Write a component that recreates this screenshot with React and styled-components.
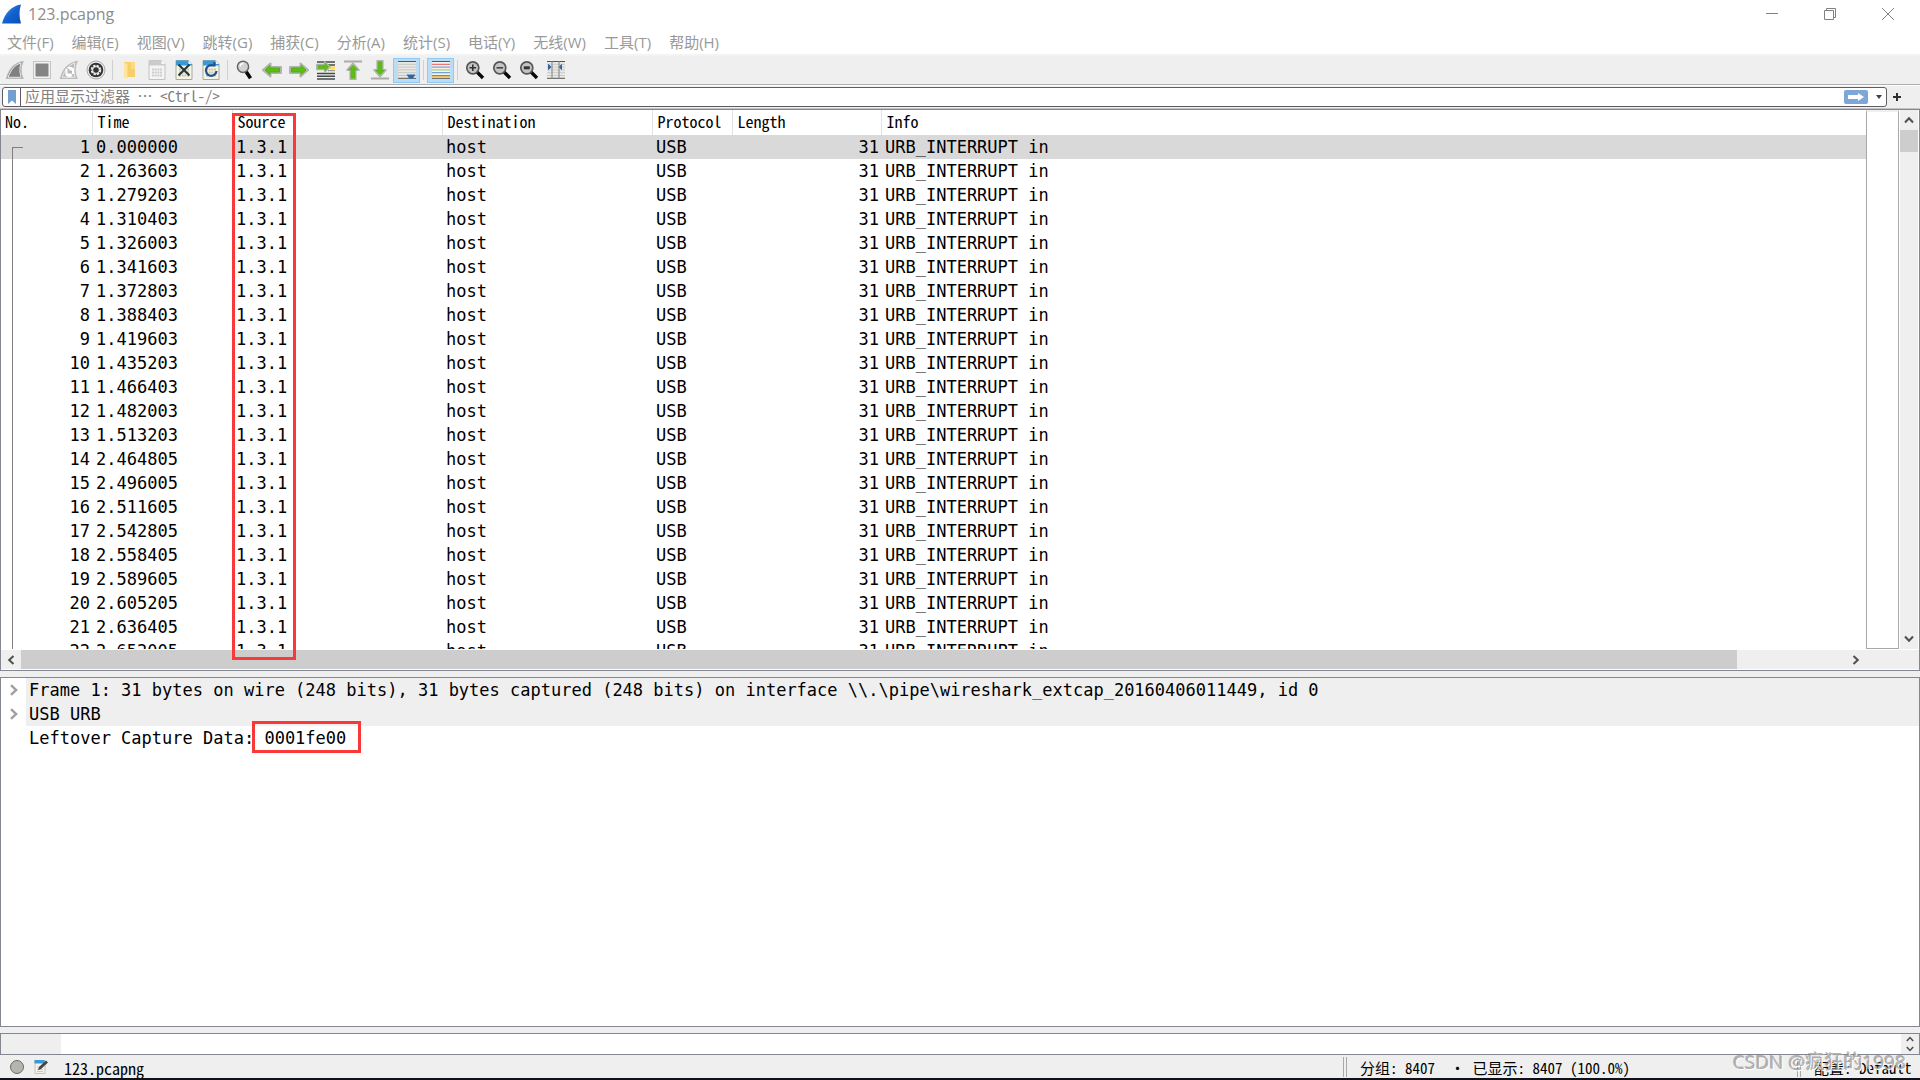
import React from "react";
import styled, { createGlobalStyle, css } from "styled-components";

const mono = '"DejaVu Sans Mono", monospace';
const slab = '"Noto Sans Mono CJK SC", "Liberation Mono", "Noto Sans CJK SC", monospace';
const sans = '"Open Sans", "Noto Sans CJK SC", sans-serif';
const edge = "#828790";
const face = "#efefef";

const Global = createGlobalStyle`
  * { box-sizing: border-box; }
  body { margin: 0; background: ${face}; color: #000; }
  button, input { font: inherit; color: inherit; margin: 0; padding: 0; border: 0; background: none; }
  button { display: flex; align-items: center; justify-content: center; }
  svg { display: block; flex: none; }
`;

const Window = styled.div`
  position: relative;
  display: flex;
  flex-direction: column;
  height: 100vh;
  overflow: hidden;
  font: 15px/20px ${slab};
  border-bottom: 2px solid #101018;
`;

const TitleBar = styled.header`
  display: flex;
  align-items: center;
  height: 28px;
  padding: 0 3px 0 2px;
  background: #fff;
  color: #8c8c8c;
  font: 16px/20px ${sans};
`;
const Title = styled.h1`
  flex: 1;
  margin: 0;
  padding-left: 6px;
  font: inherit;
`;
const CaptionButton = styled.button`
  width: 58px;
  height: 28px;
`;

const MenuBar = styled.nav`
  display: flex;
  gap: 18px;
  height: 28px;
  padding: 4px 7px 0;
  background: #fff;
  border-bottom: 2px solid #f3f3f3;
  font: 15px/20px ${sans};
  color: #999;
`;
const MenuItem = styled.button`
  height: 20px;
  white-space: nowrap;
`;

const ToolBar = styled.div`
  display: flex;
  align-items: center;
  height: 29px;
  padding-left: 1px;
  background: ${face};
  border-bottom: 1px solid #adadad;
`;
const Tool = styled.button`
  width: 27px;
  height: 25px;
  border: 1px solid transparent;
  ${(p) => p.$on && css`
    background: #bcdcf4;
    border-color: #90c8f6;
  `}
`;
const Separator = styled.span`
  width: 1px;
  height: 20px;
  margin: 0 3px;
  background: #d0d0d0;
`;

const FilterBar = styled.form`
  display: flex;
  align-items: center;
  height: 24px;
  padding: 0 18px 0 2px;
  gap: 5px;
  border-top: 1px solid #fff;
  border-bottom: 1px solid #c4c4c8;
`;
const FilterBox = styled.div`
  display: flex;
  align-items: center;
  flex: 1;
  height: 20px;
  border: 1px solid #5d5d62;
  border-radius: 3px;
  background: #fff;
`;
const Bookmark = styled.button`
  width: 18px;
  height: 18px;
  border-right: 1px solid #5d5d62;
`;
const FilterInput = styled.input`
  flex: 1;
  min-width: 0;
  height: 18px;
  padding: 0 0 2px 4px;
  outline: 0;
  &::placeholder { color: #808080; opacity: 1; }
`;
const ApplyButton = styled.button`
  width: 24px;
  height: 14px;
  border-radius: 2px;
  background: #7da7d9;
`;
const HistoryButton = styled.button`
  width: 18px;
  height: 18px;
  padding-left: 4px;
`;
const AddButton = styled.button`
  width: 10px;
  height: 18px;
`;

const Pane = styled.section`
  position: relative;
  display: flex;
  flex-direction: column;
  flex: ${(p) => p.$share} 1 0;
  min-height: 0;
  border: 1px solid ${edge};
  background: #fff;
`;
const Splitter = styled.div`
  flex: none;
  height: 6px;
  background: ${face};
`;
const ListBody = styled.div`
  display: flex;
  flex: 1;
  min-height: 0;
`;
const ListView = styled.div`
  position: relative;
  flex: 1;
  overflow: hidden;
`;
const PacketTable = styled.table`
  width: 100%;
  table-layout: fixed;
  border-collapse: collapse;
`;
const HeadCell = styled.th`
  height: 25px;
  padding: 0 0 2px 5px;
  border-left: 1px solid #e2e2e2;
  text-align: left;
  font: 16px/23px ${slab};
  &:first-child { border-left: 0; padding-left: 4px; }
`;
const Row = styled.tr`
  height: 24px;
  background: ${(p) => (p.$selected ? "#d9d9d9" : "#fff")};
`;
const Cell = styled.td`
  padding: 0 2px 0 4px;
  text-align: ${(p) => (p.$right ? "right" : "left")};
  font: 17px/24px ${mono};
  white-space: nowrap;
`;
const RelationLine = styled.span`
  position: absolute;
  left: 11px;
  top: 37px;
  bottom: 0;
  width: 11px;
  border: solid #808080;
  border-width: 1px 0 0 1px;
`;
const SourceMark = styled.span`
  position: absolute;
  z-index: 1;
  left: 231px;
  top: 3px;
  bottom: 10px;
  width: 64px;
  border: 3px solid #fb3838;
  pointer-events: none;
`;
const MiniMap = styled.div`
  width: 33px;
  border: 1px solid #a8a8a8;
  border-top: 2px solid ${face};
`;
const VScroll = styled.div`
  display: flex;
  flex-direction: column;
  align-items: center;
  width: 20px;
  background: ${face};
  border: solid #fff;
  border-width: 0 1px;
`;
const HScroll = styled.div`
  display: flex;
  height: 21px;
  padding-right: 53px;
  background: ${face};
  border: solid #fff;
  border-width: 1px 0;
`;
const ScrollButton = styled.button`
  width: 20px;
  height: 20px;
  flex: none;
`;
const VThumb = styled.span`
  width: 100%;
  height: 22px;
  background: #cdcdcd;
`;
const Track = styled.span`
  flex: 1;
`;
const HThumb = styled.span`
  display: block;
  width: 94%;
  height: 100%;
  background: #cdcdcd;
`;

const Tree = styled.ul`
  margin: 0;
  padding: 0;
  list-style: none;
  font: 17px/24px ${mono};
`;
const TreeItem = styled.li`
  display: flex;
  height: 24px;
`;
const Expander = styled.button`
  width: 25px;
  height: 24px;
  flex: none;
`;
const TreeText = styled.span`
  flex: 1;
  padding-left: 3px;
  white-space: pre;
  background: ${(p) => (p.$shaded ? "#efefef" : "transparent")};
`;
const Marked = styled.span`
  position: relative;
  display: inline-block;
  height: 24px;
  &::after {
    content: "";
    position: absolute;
    inset: -5px -15px -3px -12px;
    border: 3px solid #fb3838;
  }
`;

const BytesPane = styled.section`
  display: flex;
  flex: none;
  height: 22px;
  border: 1px solid ${edge};
  background: #fff;
`;
const Offsets = styled.div`
  width: 60px;
  background: ${face};
`;
const Bytes = styled.div`
  flex: 1;
`;
const Spin = styled.div`
  width: 18px;
  background: ${face};
`;
const SpinButton = styled.button`
  width: 18px;
  height: 10px;
`;

const StatusBar = styled.footer`
  display: flex;
  flex: none;
  align-items: center;
  height: 23px;
  padding-left: 9px;
`;
const StatusButton = styled.button`
  width: 16px;
  height: 18px;
  margin-right: 8px;
`;
const StatusText = styled.span`
  flex: ${(p) => (p.$grow ? "1" : "none")};
  width: ${(p) => p.$width || "auto"};
  padding: 3px 0 0 ${(p) => p.$pad}px;
  font-size: ${(p) => (p.$grow ? 16 : 15)}px;
  white-space: pre;
`;
const Grip = styled.span`
  width: 4px;
  height: 20px;
  border: solid #a8a8a8;
  border-width: 0 1px;
`;
const Watermark = styled.span`
  position: absolute;
  right: 14px;
  bottom: 2px;
  font: 19px/28px ${sans};
  color: rgba(165, 165, 165, 0.85);
  text-shadow: 1px 1px 0 #fff, -1px -1px 0 rgba(110, 110, 110, 0.5);
  pointer-events: none;
`;

const menus = ["文件(F)", "编辑(E)", "视图(V)", "跳转(G)", "捕获(C)", "分析(A)", "统计(S)", "电话(Y)", "无线(W)", "工具(T)", "帮助(H)"];
const columns = [
  ["No.", 91], ["Time", 140], ["Source", 210], ["Destination", 210],
  ["Protocol", 80], ["Length", 149], ["Info", null],
];
const times = [
  "0.000000", "1.263603", "1.279203", "1.310403", "1.326003", "1.341603", "1.372803", "1.388403",
  "1.419603", "1.435203", "1.466403", "1.482003", "1.513203", "2.464805", "2.496005", "2.511605",
  "2.542805", "2.558405", "2.589605", "2.605205", "2.636405", "2.652005",
];

const Icon = ({ children, size = 20 }) => (
  <svg width={size} height={size} viewBox="0 0 20 20" fill="none" aria-hidden="true">{children}</svg>
);

const Chevron = ({ dir, color = "#505050", size = 10 }) => {
  const turn = { up: 0, right: 90, down: 180, left: 270 }[dir];
  return (
    <svg width={size} height={size} viewBox="0 0 10 10" fill="none" aria-hidden="true">
      <path d="M1 7.5 5 3.2 9 7.5" stroke={color} strokeWidth="2" transform={`rotate(${turn} 5 5)`} />
    </svg>
  );
};

const finPath = "M1.5 18.5C4 9 9 3 18 1.5C15.5 7 15.5 13 18 18.5Z";
const Fin = ({ restart }) => (
  <Icon>
    <path d={finPath} fill={restart ? "#b8b8b8" : "#808080"} stroke="#bcbcbc" strokeWidth="1.2" />
    <path d="M3.2 17.3C6 9.5 9.5 5 16 3C14.5 8 14.5 13 16.2 17.3Z" stroke="#ededed" strokeWidth="1" />
    {restart && <path d="M7.5 9v5.5h5M14 14V9.5H10.5M7 14a3.5 3 0 0 0 6 1M14 10a3.5 3 0 0 0-5-2" stroke="#fff" strokeWidth="2" />}
  </Icon>
);
const StopIcon = () => (
  <Icon>
    <rect x="1.5" y="1.5" width="17" height="17" fill="#f2f2f2" stroke="#c4c4c4" />
    <rect x="3.5" y="3.5" width="13" height="13" fill="#848484" />
  </Icon>
);
const OptionsIcon = () => (
  <Icon>
    <circle cx="10" cy="10" r="9" fill="#ededed" stroke="#a8a8a8" />
    <circle cx="10" cy="10" r="7.3" fill="#333" />
    <circle cx="10" cy="10" r="4.3" stroke="#eee" strokeWidth="2" strokeDasharray="2.4 .98" />
    <circle cx="10" cy="10" r="3.4" stroke="#eee" strokeWidth="1" />
    <circle cx="10" cy="10" r="2" fill="#333" />
  </Icon>
);
const FolderIcon = () => (
  <Icon>
    <path d="M4 2h7v7h4v8H4Z" fill="#f7cf6a" />
    <path d="M4 2.5 7.5 4v15L4 17.5Z" fill="#ffe49a" />
    <path d="M11 2h4v7h-4Z" fill="#fbdc85" />
  </Icon>
);
const FileIcon = ({ kind }) => {
  const live = kind !== "save";
  return (
    <Icon>
      <path d="M2 .5h12.5L18 4V19.500H2Z" fill={live ? "#f5f5e4" : "#f4f4f4"} stroke={live ? "#a9a9a0" : "#c2c2c2"} />
      <path d="M2 .5h12.5L18 4V5.500H2Z" fill={live ? "#369bd8" : "#cbcbcb"} />
      <path d="M14.5 .5V4H18Z" fill="#fff" />
      <path d="M5 9.500h10M5 12.500h10M5 15.500h10" stroke={live ? "#c6c6b8" : "#cdcdcd"} strokeWidth="2" strokeDasharray="2 .7" />
      {kind === "close" && <path d="M4.500 4.500 15.500 15.500M15.500 4.500 4.500 15.500" stroke="#26333a" strokeWidth="2" />}
      {kind === "reload" && <path d="M12 5.500a5.300 5.300 0 1 0 3.500 5.500M8 5.500h5.500v-3.500" stroke="#234f8f" strokeWidth="2.200" />}
    </Icon>
  );
};
const Lens = ({ sign }) => (
  <Icon>
    <path d="m12 12 6 6" stroke="#080808" strokeWidth="3.4" />
    <circle cx="7.8" cy="7.8" r="6" fill="#c4c4c4" stroke="#555" strokeWidth="1.7" />
    {sign === "plus" && <path d="M4.5 7.8h6.6M7.8 4.5v6.6" stroke="#333" strokeWidth="1.6" />}
    {sign === "minus" && <path d="M4.5 7.8h6.6" stroke="#444" strokeWidth="1.6" />}
    {sign === "reset" && <path d="M4.8 7.8h6" stroke="#333" strokeWidth="3" />}
  </Icon>
);
const FindIcon = () => (
  <Icon>
    <path d="m11 11.5 4.500 6.8" stroke="#080808" strokeWidth="3.6" />
    <circle cx="8" cy="6.8" r="5.6" fill="#d2d2d2" stroke="#666" strokeWidth="1.5" />
    <path d="M5 6.5a3.5 3.5 0 0 1 3.5-3" stroke="#fff" strokeWidth="1.4" />
  </Icon>
);
const arrow = "M1 10 8.500 3.500V7H19v6H8.500v3.500Z";
const Arrow = ({ turn = 0, at = "" }) => (
  <g transform={`${at} rotate(${turn} 10 10)`} strokeLinejoin="round">
    <path d={arrow} fill="#fff" stroke="#b0b4ac" strokeWidth="2" />
    <path d="M3 10 7.800 5.500V8H17.500v4H7.800v2.500Z" fill="#5cbd12" stroke="#4fae10" />
  </g>
);
const GotoIcon = () => (
  <Icon>
    <path d="M1 2h18M10 5h9M1 13.5h18M1 16.2h18M1 19h18" stroke="#454b4b" strokeWidth="1.4" />
    <path d="M14 8h5" stroke="#ffdf4a" strokeWidth="3" />
    <path d="M12 10.7h7" stroke="#888" />
    <Arrow turn={180} at="translate(0 -1) scale(.75 .8)" />
  </Icon>
);
const EndIcon = ({ top }) => (
  <Icon>
    <path d={top ? "M1 1.5h18" : "M1 18.5h18"} stroke="#aaa" strokeWidth="2" />
    <Arrow turn={top ? 90 : 270} at={top ? "translate(1 2.5) scale(.9)" : "translate(1 -.5) scale(.9)"} />
  </Icon>
);
const Lines = ({ colors }) => (
  <>{colors.map((c, i) => <path key={i} d={`M1 ${1.5 + i * 2.8}h18`} stroke={c} strokeWidth="1" />)}</>
);
const AutoScrollIcon = () => (
  <Icon>
    <rect x="1" y="1" width="18" height="18" fill="#e8e9e4" />
    <Lines colors={["#555", "#c6c6c0", "#c6c6c0", "#c6c6c0", "#c6c6c0", "#c6c6c0", "#555"]} />
    <path d="M9.5 14.5h9L15.8 18.5h-3.6Z" fill="#2f65ad" />
  </Icon>
);
const ColorIcon = () => (
  <Icon>
    <rect x="1" y="1" width="18" height="18" fill="#f3f3f0" />
    <Lines colors={["#555", "#ee5555", "#5b8dc9", "#8bcf55", "#5b8dc9", "#9572b0", "#555"]} />
    <path d="M1 16.8h18" stroke="#dcae35" />
  </Icon>
);
const ResizeIcon = () => (
  <Icon>
    <rect x="1" y="1" width="18" height="18" fill="#e8e9e4" />
    <Lines colors={["#555", "#ccc", "#ccc", "#ccc", "#ccc", "#ccc", "#555"]} />
    <path d="M6 1v18M13 1v18" stroke="#808080" />
    <path d="M2.500 4.500 5 7 2.500 9.500ZM15.500 4.500 13.500 7l2 2.500Z" fill="#2f65ad" stroke="#2f65ad" />
  </Icon>
);

const tools = [
  ["开始捕获", <Fin />], ["停止捕获", <StopIcon />], ["重新开始捕获", <Fin restart />], ["捕获选项", <OptionsIcon />], null,
  ["打开", <FolderIcon />], ["保存", <FileIcon kind="save" />], ["关闭", <FileIcon kind="close" />], ["重新加载", <FileIcon kind="reload" />], null,
  ["查找", <FindIcon />], ["后退", <Icon><Arrow /></Icon>], ["前进", <Icon><Arrow turn={180} /></Icon>], ["转到分组", <GotoIcon />],
  ["首个分组", <EndIcon top />], ["最后分组", <EndIcon />], ["自动滚动", <AutoScrollIcon />, true], null,
  ["着色", <ColorIcon />, true], null,
  ["放大", <Lens sign="plus" />], ["缩小", <Lens sign="minus" />], ["原始大小", <Lens sign="reset" />], ["调整列宽", <ResizeIcon />],
];

export default function App() {
  return (
    <Window>
      <Global />
      <TitleBar>
        <svg width="20" height="20" viewBox="0 0 20 20" aria-hidden="true">
          <defs>
            <linearGradient id="fin" x1="0" y1="0" x2="1" y2="1">
              <stop offset="0" stopColor="#4a9af0" /><stop offset=".5" stopColor="#1263d0" /><stop offset="1" stopColor="#0a4fb4" />
            </linearGradient>
          </defs>
          <path d="M0 19.5C3 9 9 2 19 .5C17 6 17 13 19 19.5Z" fill="url(#fin)" />
        </svg>
        <Title>123.pcapng</Title>
        <CaptionButton aria-label="最小化"><svg width="12" height="12" viewBox="0 0 12 12"><path d="M0 5.5h12" stroke="#808080" /></svg></CaptionButton>
        <CaptionButton aria-label="还原"><svg width="12" height="12" viewBox="0 0 12 12" fill="none" stroke="#808080"><path d="M.5 2.5h9v9h-9ZM2.5 2.5v-2h9v9h-2" /></svg></CaptionButton>
        <CaptionButton aria-label="关闭"><svg width="12" height="12" viewBox="0 0 12 12"><path d="m0 0 12 12M12 0 0 12" stroke="#808080" /></svg></CaptionButton>
      </TitleBar>
      <MenuBar>{menus.map((m) => <MenuItem key={m}>{m}</MenuItem>)}</MenuBar>
      <ToolBar>
        {tools.map((t, i) => t
          ? <Tool key={i} aria-label={t[0]} $on={t[2]}>{t[1]}</Tool>
          : <Separator key={i} />)}
      </ToolBar>
      <FilterBar onSubmit={(e) => e.preventDefault()}>
        <FilterBox>
          <Bookmark type="button" aria-label="书签">
            <svg width="8" height="14" viewBox="0 0 8 14"><path d="M0 0h8v14L4 10.5 0 14Z" fill="#729fcf" /></svg>
          </Bookmark>
          <FilterInput aria-label="显示过滤器" placeholder="应用显示过滤器 … <Ctrl-/>" />
          <ApplyButton aria-label="应用">
            <svg width="16" height="8" viewBox="0 0 16 8"><path d="M0 2h10V0l6 4-6 4V6H0Z" fill="#fff" /></svg>
          </ApplyButton>
          <HistoryButton type="button" aria-label="历史">
            <svg width="6" height="4" viewBox="0 0 6 4"><path d="M0 0h6L3 4Z" fill="#404040" /></svg>
          </HistoryButton>
        </FilterBox>
        <AddButton type="button" aria-label="添加">
          <svg width="8" height="8" viewBox="0 0 8 8"><path d="M4 0v8M0 4h8" stroke="#303030" strokeWidth="2" /></svg>
        </AddButton>
      </FilterBar>

      <Pane $share={562}>
        <SourceMark />
        <ListBody>
          <ListView>
            <PacketTable>
              <colgroup>
                {columns.map(([name, w]) => <col key={name} width={w || undefined} />)}
              </colgroup>
              <thead><tr>{columns.map(([name]) => <HeadCell key={name}>{name}</HeadCell>)}</tr></thead>
              <tbody>
                {times.map((time, i) => (
                  <Row key={time} $selected={i === 0}>
                    <Cell $right>{i + 1}</Cell><Cell>{time}</Cell><Cell>1.3.1</Cell><Cell>host</Cell>
                    <Cell>USB</Cell><Cell $right>31</Cell><Cell>URB_INTERRUPT in</Cell>
                  </Row>
                ))}
              </tbody>
            </PacketTable>
            <RelationLine />
          </ListView>
          <MiniMap />
          <VScroll>
            <ScrollButton aria-label="向上滚动"><Chevron dir="up" /></ScrollButton>
            <VThumb />
            <Track />
            <ScrollButton aria-label="向下滚动"><Chevron dir="down" /></ScrollButton>
          </VScroll>
        </ListBody>
        <HScroll>
          <ScrollButton aria-label="向左滚动"><Chevron dir="left" /></ScrollButton>
          <Track><HThumb /></Track>
          <ScrollButton aria-label="向右滚动"><Chevron dir="right" /></ScrollButton>
        </HScroll>
      </Pane>
      <Splitter />
      <Pane $share={350}>
        <Tree>
          <TreeItem>
            <Expander aria-label="展开 Frame 1"><Chevron dir="right" color="#a0a0a0" size={12} /></Expander>
            <TreeText $shaded>{"Frame 1: 31 bytes on wire (248 bits), 31 bytes captured (248 bits) on interface \\\\.\\pipe\\wireshark_extcap_20160406011449, id 0"}</TreeText>
          </TreeItem>
          <TreeItem>
            <Expander aria-label="展开 USB URB"><Chevron dir="right" color="#a0a0a0" size={12} /></Expander>
            <TreeText $shaded>USB URB</TreeText>
          </TreeItem>
          <TreeItem>
            <Expander as="span" />
            <TreeText>Leftover Capture Data: <Marked>0001fe00</Marked></TreeText>
          </TreeItem>
        </Tree>
      </Pane>
      <Splitter />
      <BytesPane>
        <Offsets />
        <Bytes />
        <Spin>
          <SpinButton aria-label="向上"><Chevron dir="up" size={8} /></SpinButton>
          <SpinButton aria-label="向下"><Chevron dir="down" size={8} /></SpinButton>
        </Spin>
      </BytesPane>
      <StatusBar>
        <StatusButton aria-label="专家信息">
          <svg width="16" height="16" viewBox="0 0 16 16"><circle cx="8" cy="8" r="6.5" fill="#b3b5ae" stroke="#696b66" /></svg>
        </StatusButton>
        <StatusButton aria-label="捕获文件注释">
          <svg width="16" height="16" viewBox="0 0 16 16" fill="none">
            <path d="M2 1.500h10v13H2Z" fill="#f4f4ec" stroke="#c4c4bc" />
            <path d="M1.500 1h10V4.500h-10Z" fill="#369bd8" />
            <path d="M4 8h6M4 10.500h6M4 12.500h6" stroke="#c8c8c0" />
            <path d="m5 11 1-3 7-6.500 2 2L8 10Z" fill="#444" />
          </svg>
        </StatusButton>
        <StatusText $grow $pad={7}>123.pcapng</StatusText>
        <Grip />
        <StatusText $width="450px" $pad={13}>分组: 8407  · 已显示: 8407 (100.0%)</StatusText>
        <Grip />
        <StatusText $width="119px" $pad={13}>配置: Default</StatusText>
      </StatusBar>
      <Watermark>CSDN @疯狂的1998</Watermark>
    </Window>
  );
}
